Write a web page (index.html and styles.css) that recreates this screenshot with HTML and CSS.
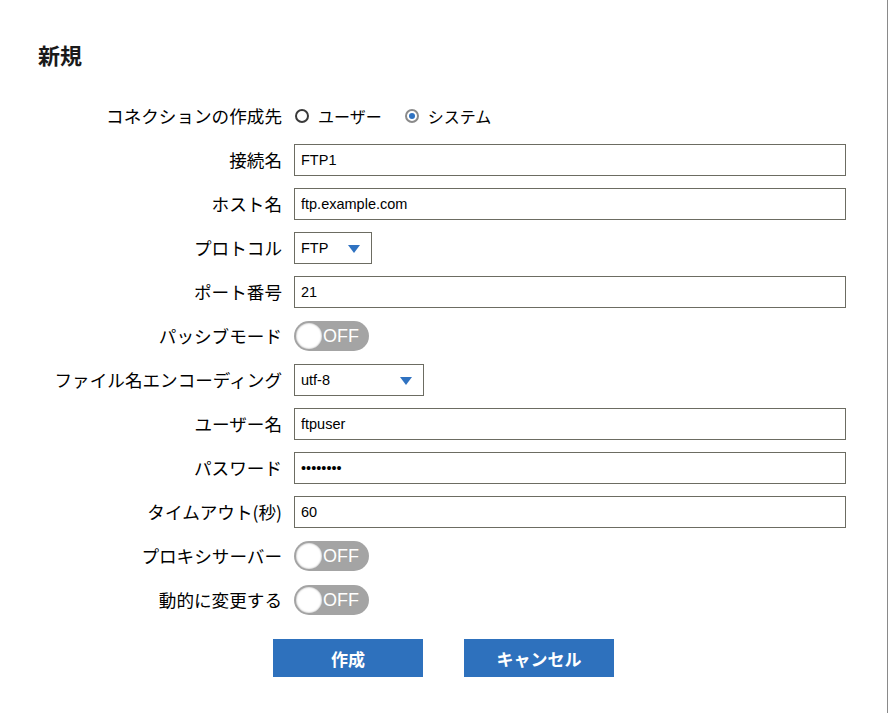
FILE: index.html
```html
<!DOCTYPE html>
<html lang="ja">

<head>
    <meta charset="UTF-8">
    <meta name="viewport" content="width=device-width, initial-scale=1.0">
    <title>新規</title>
    <link rel="stylesheet" href="styles.css">
</head>

<body>
    <div class="page">
        <h1 class="title">新規</h1>

        <form class="form">
            <label class="label">コネクションの作成先</label>
            <div class="field radios">
                <span class="radio"><span class="radio-dot"></span>ユーザー</span>
                <span class="radio checked"><span class="radio-dot"></span>システム</span>
            </div>

            <label class="label">接続名</label>
            <div class="field"><input class="text" type="text" value="FTP1"></div>

            <label class="label">ホスト名</label>
            <div class="field"><input class="text" type="text" value="ftp.example.com"></div>

            <label class="label">プロトコル</label>
            <div class="field">
                <div class="select select-short">
                    <span>FTP</span>
                    <svg class="caret" width="12" height="8" viewBox="0 0 12 8"><path d="M0 0h12L6 8z" fill="#2f72c1"/></svg>
                </div>
            </div>

            <label class="label">ポート番号</label>
            <div class="field"><input class="text" type="text" value="21"></div>

            <label class="label">パッシブモード</label>
            <div class="field">
                <span class="toggle"><span class="knob"></span><span class="toggle-text">OFF</span></span>
            </div>

            <label class="label">ファイル名エンコーディング</label>
            <div class="field">
                <div class="select select-long">
                    <span>utf-8</span>
                    <svg class="caret" width="12" height="8" viewBox="0 0 12 8"><path d="M0 0h12L6 8z" fill="#2f72c1"/></svg>
                </div>
            </div>

            <label class="label">ユーザー名</label>
            <div class="field"><input class="text" type="text" value="ftpuser"></div>

            <label class="label">パスワード</label>
            <div class="field"><input class="text" type="text" value="••••••••"></div>

            <label class="label">タイムアウト(秒)</label>
            <div class="field"><input class="text" type="text" value="60"></div>

            <label class="label">プロキシサーバー</label>
            <div class="field">
                <span class="toggle"><span class="knob"></span><span class="toggle-text">OFF</span></span>
            </div>

            <label class="label">動的に変更する</label>
            <div class="field">
                <span class="toggle"><span class="knob"></span><span class="toggle-text">OFF</span></span>
            </div>
        </form>

        <div class="buttons">
            <button class="btn" type="button">作成</button>
            <button class="btn" type="button">キャンセル</button>
        </div>
    </div>
</body>

</html>
```

FILE: styles.css
```css
html,
body {
    margin: 0;
    padding: 0;
    background: #fff;
}

body {
    font-family: "Noto Sans CJK JP", "Liberation Sans", sans-serif;
    color: #000;
}

.page {
    width: 887px;
    min-height: 713px;
    border-right: 1px solid #8a8a8a;
}

.title {
    margin: 0;
    padding: 39px 0 0 38px;
    height: 64px;
    box-sizing: border-box;
    font-size: 22px;
    font-weight: bold;
    line-height: 30px;
    color: #1a1a1a;
}

/* フォーム本体 */
.form {
    display: grid;
    grid-template-columns: 282px 552px;
    grid-auto-rows: 32px;
    column-gap: 12px;
    row-gap: 12px;
    margin-top: 36px;
}

.label {
    font-size: 17.6px;
    line-height: 32px;
    text-align: right;
    white-space: nowrap;
}

.field {
    display: flex;
    align-items: center;
}

.radios {
    gap: 22px;
    font-size: 16px;
}

.radio {
    display: flex;
    align-items: center;
    gap: 9px;
}

.radio-dot {
    width: 10px;
    height: 10px;
    border: 2px solid #3a3a3a;
    border-radius: 50%;
    position: relative;
    margin-left: 1px;
}

.radio.checked .radio-dot {
    border-color: #8a8a8a;
}

.radio.checked .radio-dot::after {
    content: "";
    position: absolute;
    left: 2px;
    top: 2px;
    width: 6px;
    height: 6px;
    border-radius: 50%;
    background: #2f72c1;
}

.text {
    width: 100%;
    height: 32px;
    box-sizing: border-box;
    border: 1px solid #6c6c62;
    border-radius: 0;
    padding: 0 6px;
    font-family: "Liberation Sans", Arial, sans-serif;
    font-size: 14.5px;
    color: #000;
    outline: none;
}

.select {
    position: relative;
    height: 32px;
    box-sizing: border-box;
    border: 1px solid #6c6c62;
    padding: 0 6px;
    display: flex;
    align-items: center;
    font-family: "Liberation Sans", Arial, sans-serif;
    font-size: 14.5px;
}

.select-short {
    width: 78px;
}

.select-long {
    width: 130px;
}

.caret {
    position: absolute;
    right: 11px;
    top: 12px;
}

/* トグルスイッチ */
.toggle {
    display: flex;
    align-items: center;
    width: 75px;
    height: 30px;
    box-sizing: border-box;
    border-radius: 15px;
    background: #a4a4a4;
    padding-left: 2px;
}

.knob {
    width: 26px;
    height: 26px;
    border-radius: 50%;
    background: #fff;
    box-shadow: inset 0 0 2px #999;
}

.toggle-text {
    margin-left: 1px;
    font-family: "Liberation Sans", Arial, sans-serif;
    font-size: 18px;
    color: #fff;
}

.buttons {
    display: flex;
    justify-content: center;
    gap: 41px;
    margin-top: 23px;
}

.btn {
    width: 150px;
    height: 38px;
    border: none;
    background: #2e71bd;
    color: #fff;
    font-family: "Noto Sans CJK JP", sans-serif;
    font-size: 17px;
    font-weight: bold;
    cursor: pointer;
}
```
